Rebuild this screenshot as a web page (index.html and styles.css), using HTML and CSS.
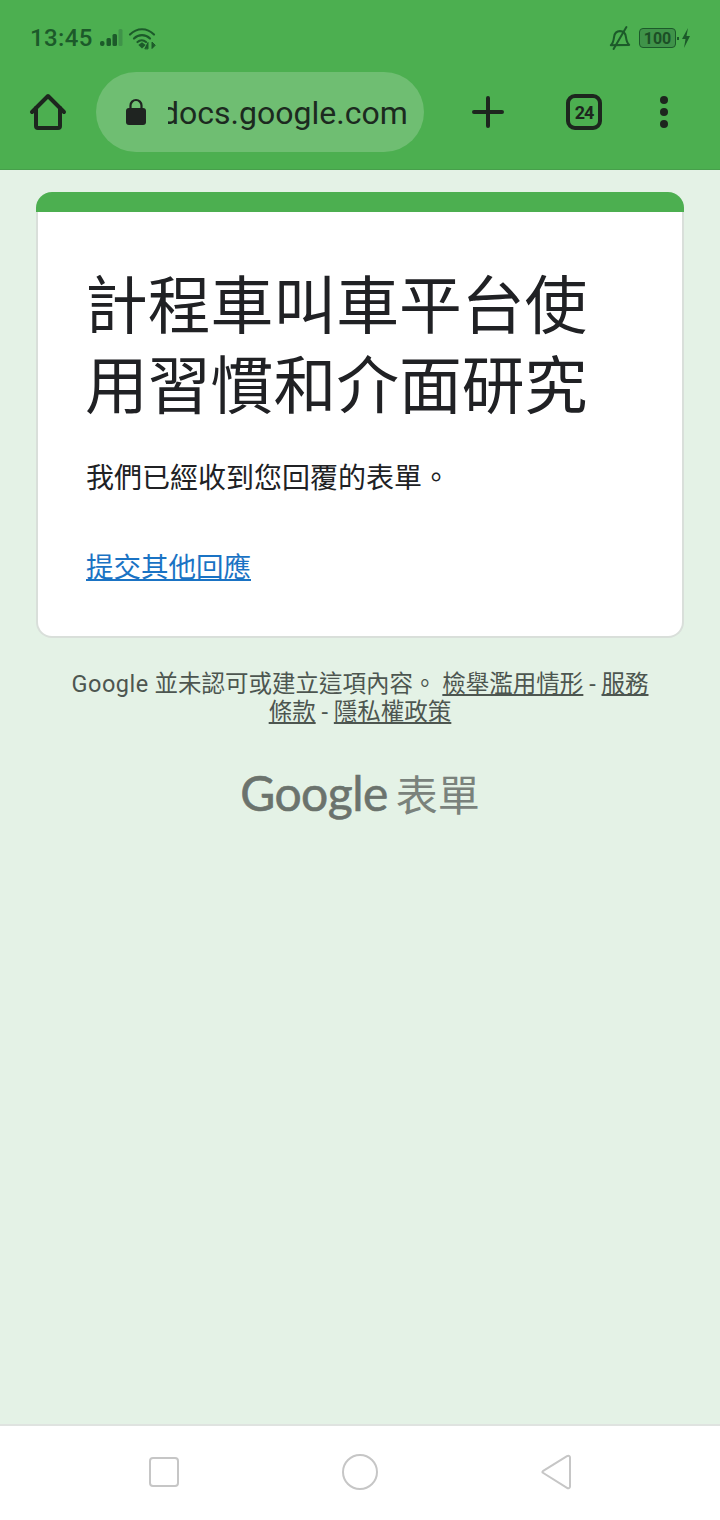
FILE: index.html
```html
<!DOCTYPE html>
<html lang="zh-Hant">
<head>
    <meta charset="UTF-8">
    <meta name="viewport" content="width=device-width, initial-scale=1.0">
    <title>計程車叫車平台使用習慣和介面研究</title>
    <link rel="stylesheet" href="styles.css">
</head>
<body>

<div class="phone">
    <header class="chrome">
        <div class="status-bar">
            <div class="status-left">
                <span class="clock">13:45</span>
                <svg class="signal" width="24" height="20" viewBox="0 0 24 20">
                    <rect x="0" y="13" width="4.500" height="5" rx="2" fill="#1c5a2a"/>
                    <rect x="6.500" y="10" width="4.500" height="8" rx="1.500" fill="#1c5a2a"/>
                    <rect x="12.500" y="6" width="4.500" height="12" rx="1.500" fill="#1c5a2a"/>
                    <rect x="18.500" y="1" width="4" height="17" rx="1.500" fill="#3f9349"/>
                </svg>
                <svg class="wifi" width="30" height="24" viewBox="0 0 30 24" fill="none" stroke="#1c5a2a" stroke-width="2.200" stroke-linecap="round">
                    <path d="M2 8.500C9 1.500 19 1.500 26 8.500"/>
                    <path d="M6 12.500C10.500 8 17.500 8 22 12.500"/>
                    <path d="M9.500 16C12 13.800 15.500 13.800 18 16"/>
                    <path d="M12 19l2 2 2-2-2-1.500z" fill="#1c5a2a"/>
                    <path d="M20 22.500v-6l-3 6z" fill="#1c5a2a" stroke-width="1"/>
                    <path d="M24 16.500v6l3-3z" fill="#1c5a2a" stroke-width="1"/>
                </svg>
            </div>
            <div class="status-right">
                <svg class="bell" width="22" height="26" viewBox="0 0 24 26" fill="none" stroke="#1c5a2a" stroke-width="2.200" stroke-linecap="round" stroke-linejoin="round">
                    <path d="M2 21c2.500-2.500 3-5 3.500-9 .5-4 3-6.500 6.500-6.500s6 2.500 6.500 6.500c.5 4 1 6.500 3.500 8.500z"/>
                    <path d="M19 1L5 25"/>
                </svg>
                <div class="battery"><span>100</span></div>
                <span class="battery-tip"></span>
                <svg class="bolt" width="10" height="20" viewBox="0 0 10 20">
                    <path d="M7 0L1 11h3.500L3 20l6-12H5.500z" fill="#1c5a2a"/>
                </svg>
            </div>
        </div>
        <div class="toolbar">
            <svg class="home-icon" width="38" height="38" viewBox="0 0 38 38" fill="none" stroke="#1d261e" stroke-width="4" stroke-linecap="round" stroke-linejoin="round">
                <path d="M3 19L19 3l16 16"/>
                <path d="M7 15v18a2 2 0 0 0 2 2h20a2 2 0 0 0 2-2V15"/>
            </svg>
            <div class="url-pill">
                <svg class="lock" width="22" height="28" viewBox="0 0 22 28">
                    <path d="M5.500 12V7.500a5.500 5.500 0 0 1 11 0V12" fill="none" stroke="#1f2421" stroke-width="2.200"/>
                    <rect x="1" y="10" width="20" height="17" rx="3" fill="#1f2421"/>
                </svg>
                <div class="url-clip"><span>docs.google.com</span></div>
            </div>
            <svg class="plus" width="34" height="34" viewBox="0 0 34 34" stroke="#1d261e" stroke-width="4" stroke-linecap="round">
                <path d="M17 3v28M3 17h28"/>
            </svg>
            <div class="tabs">24</div>
            <div class="more"><i></i><i></i><i></i></div>
        </div>
    </header>

    <main class="content">
        <section class="card">
            <div class="card-top"></div>
            <div class="card-body">
                <h1>計程車叫車平台使用習慣和介面研究</h1>
                <p class="message">我們已經收到您回覆的表單。</p>
                <a class="other" href="#">提交其他回應</a>
            </div>
        </section>
        <p class="legal"><span class="legal-latin">Google</span> 並未認可或建立這項內容。 <a href="#">檢舉濫用情形</a> - <a href="#">服務條款</a> - <a href="#">隱私權政策</a></p>
        <div class="brand"><span class="brand-google">Google</span> <span class="brand-forms">表單</span></div>
    </main>

    <nav class="nav-bar">
        <svg width="32" height="32" viewBox="0 0 32 32" fill="none" stroke="#c6c6c6" stroke-width="2">
            <rect x="2" y="2" width="28" height="28" rx="3"/>
        </svg>
        <svg width="36" height="36" viewBox="0 0 36 36" fill="none" stroke="#c6c6c6" stroke-width="2">
            <circle cx="18" cy="18" r="17"/>
        </svg>
        <svg width="32" height="36" viewBox="0 0 32 36" fill="none" stroke="#c6c6c6" stroke-width="2" stroke-linejoin="round">
            <path d="M2.500 18.500a1 1 0 0 1 .3-1.300L27 2.200c1.500-.8 3-.3 3 1.300v29c0 1.600-1.500 2.200-3 1.300z"/>
        </svg>
    </nav>
</div>

</body>
</html>
```

FILE: styles.css
```css
* {
    box-sizing: border-box;
}

body {
    margin: 0;
    font-family: Roboto, "Noto Sans CJK TC", sans-serif;
    background: #e4f2e6;
}

.phone {
    display: flex;
    flex-direction: column;
    width: 720px;
    height: 1520px;
    overflow: hidden;
}

/* Status bar and browser toolbar */
.chrome {
    height: 170px;
    flex-shrink: 0;
    background: #4caf50;
    border-bottom: 1px solid #479f4b;
    padding: 20px 29px 0 29px;
}

.status-bar {
    display: flex;
    justify-content: space-between;
    align-items: center;
    height: 36px;
    padding-left: 1px;
}

.status-left,
.status-right {
    display: flex;
    align-items: center;
}

.clock {
    font-size: 24px;
    font-weight: 500;
    letter-spacing: 0.4px;
    color: #1c5a2a;
}

.signal {
    margin-left: 7px;
}

.wifi {
    margin-left: 4px;
}

.bell {
    margin-right: 8px;
}

.battery {
    display: flex;
    align-items: center;
    justify-content: center;
    width: 37px;
    height: 20px;
    border: 1px solid #1c5a2a;
    border-radius: 4px;
    background: #3f9349;
}

.battery span {
    font-size: 16px;
    font-weight: 700;
    color: #1c4f26;
}

.battery-tip {
    width: 2px;
    height: 3px;
    margin: 0 2px 0 1px;
    background: #1c5a2a;
}

.toolbar {
    display: flex;
    align-items: center;
    height: 80px;
    margin-top: 16px;
}

.home-icon {
    margin-right: 29px;
}

.url-pill {
    display: flex;
    align-items: center;
    width: 328px;
    height: 80px;
    padding-left: 29px;
    border-radius: 40px;
    background: #6fbe72;
}

.lock {
    flex-shrink: 0;
}

.url-clip {
    width: 241px;
    margin-left: 21px;
    overflow: hidden;
    white-space: nowrap;
    font-size: 32px;
    line-height: 40px;
    padding-top: 2px;
    color: #1c2a1f;
}

.url-clip span {
    margin-left: -7px;
}

.plus {
    margin-left: 47px;
}

.tabs {
    display: flex;
    align-items: center;
    justify-content: center;
    width: 36px;
    height: 36px;
    margin-left: 61px;
    border: 4px solid #1d261e;
    border-radius: 9px;
    font-size: 18px;
    font-weight: 700;
    letter-spacing: -1px;
    color: #1d261e;
}

.more {
    display: flex;
    flex-direction: column;
    gap: 4px;
    margin-left: 58px;
}

.more i {
    width: 8px;
    height: 8px;
    border-radius: 50%;
    background: #1d261e;
}

/* Form card */
.content {
    flex: 1;
    padding: 22px 36px 0 36px;
}

.card {
    height: 446px;
    background: #fff;
    border-radius: 16px;
    border: 2px solid #d9dfda;
    border-top: 0;
}

.card-top {
    height: 20px;
    margin: 0 -2px;
    border-radius: 16px 16px 0 0;
    background: #4caf50;
}

.card-body {
    padding: 55px 48px 0 48px;
}

h1 {
    margin: 0 -4px 0 -1px;
    font-size: 62.800px;
    font-weight: 400;
    line-height: 80px;
    color: #202124;
}

.message {
    margin: 32px 0 0 0;
    font-size: 28px;
    line-height: 40px;
    color: #202124;
}

.other {
    display: inline-block;
    margin-top: 49px;
    font-size: 27.500px;
    line-height: 40px;
    color: #1a73c4;
}

/* Footer */
.legal {
    margin: 32px 0 0 0;
    padding: 0 30px;
    text-align: center;
    font-size: 23.500px;
    line-height: 28px;
    color: #4d5650;
}

.legal-latin {
    letter-spacing: 0.5px;
}

.legal a {
    color: #4d5650;
}

.brand {
    display: flex;
    justify-content: center;
    align-items: center;
    gap: 8px;
    margin-top: 36px;
    height: 60px;
    color: #6b736d;
}

.brand-google {
    font-family: Lato, sans-serif;
    font-size: 48px;
    letter-spacing: -0.5px;
    -webkit-text-stroke: 0.6px #6b736d;
}

.brand-forms {
    font-size: 42px;
    font-weight: 400;
    color: #7a827c;
}

/* Android navigation bar */
.nav-bar {
    display: flex;
    justify-content: center;
    align-items: center;
    gap: 162px;
    height: 96px;
    flex-shrink: 0;
    padding-bottom: 3px;
    border-top: 2px solid #dfe3e0;
    background: #fff;
}
```
